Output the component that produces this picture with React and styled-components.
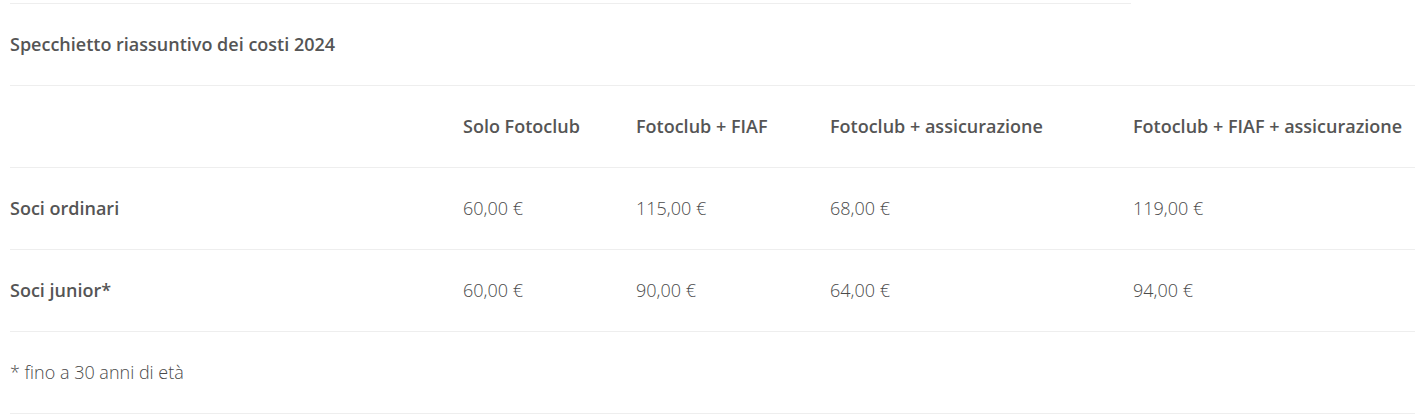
import React from 'react';
import styled, { createGlobalStyle } from 'styled-components';

const GlobalStyle = createGlobalStyle`
  body {
    margin: 0;
    background: #fff;
    font-family: "Open Sans", "Liberation Sans", sans-serif;
    font-size: 18px;
    color: #555;
  }
`;

const Wrapper = styled.div`
  padding: 3px 0 0 10px;
  overflow: hidden;
`;

const TopRule = styled.div`
  width: 1121px;
  height: 1px;
  background: #eeeeee;
`;

const Row = styled.div`
  display: grid;
  grid-template-columns: 453px 173px 194px 303px 1fr;
  align-items: center;
  height: 81px;
  border-bottom: 1px solid #eeeeee;
`;

const Cell = styled.div`
  font-weight: ${(p) => (p.$strong ? 600 : 300)};
  color: ${(p) => (p.$strong ? '#555' : '#4a4a4a')};
  white-space: nowrap;
  line-height: 1.2;
  grid-column: ${(p) => (p.$span ? '1 / -1' : 'auto')};
`;

const columns = [
  '',
  'Solo Fotoclub',
  'Fotoclub + FIAF',
  'Fotoclub + assicurazione',
  'Fotoclub + FIAF + assicurazione',
];

const rows = [
  { label: 'Soci ordinari', prices: ['60,00 €', '115,00 €', '68,00 €', '119,00 €'] },
  { label: 'Soci junior*', prices: ['60,00 €', '90,00 €', '64,00 €', '94,00 €'] },
];

export default function App() {
  return (
    <>
      <GlobalStyle />
      <Wrapper>
        <TopRule />
        <Row>
          <Cell $strong $span>Specchietto riassuntivo dei costi 2024</Cell>
        </Row>
        <Row>
          {columns.map((c, i) => (
            <Cell key={i} $strong>{c}</Cell>
          ))}
        </Row>
        {rows.map((r) => (
          <Row key={r.label}>
            <Cell $strong>{r.label}</Cell>
            {r.prices.map((p, i) => (
              <Cell key={i}>{p}</Cell>
            ))}
          </Row>
        ))}
        <Row>
          <Cell $span>* fino a 30 anni di età</Cell>
        </Row>
      </Wrapper>
    </>
  );
}
